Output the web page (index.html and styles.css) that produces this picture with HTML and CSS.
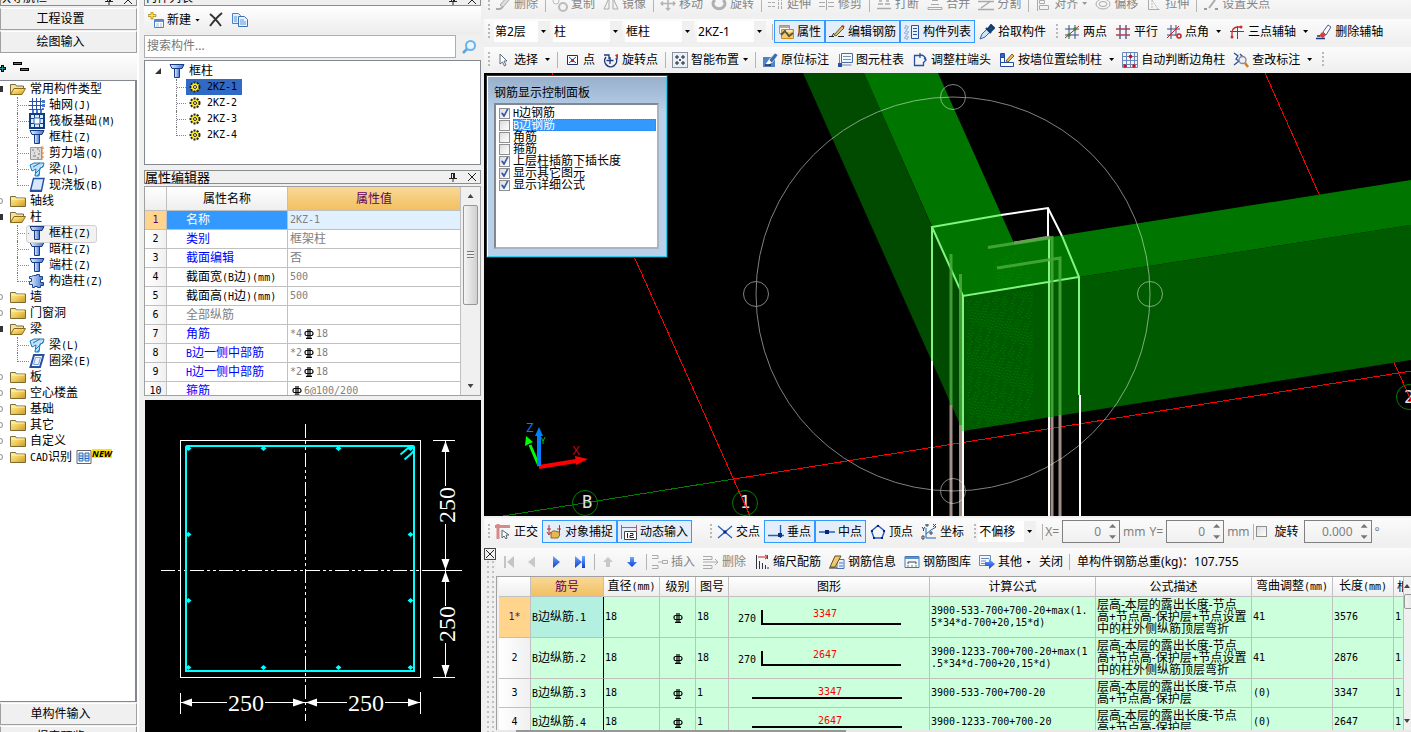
FILE: index.html
```html
<!DOCTYPE html>
<html lang="zh-CN">
<head>
<meta charset="utf-8">
<title>钢筋算量</title>
<link rel="stylesheet" href="styles.css">
</head>
<body>
<svg class="defs" aria-hidden="true">
  <defs>
    <linearGradient id="gold" x1="0" y1="0" x2="1" y2="1"><stop offset="0" stop-color="#fff0b0"/><stop offset=".5" stop-color="#f2cd55"/><stop offset="1" stop-color="#c8962a"/></linearGradient>
    <linearGradient id="blue" x1="0" y1="0" x2="1" y2="0"><stop offset="0" stop-color="#e8f2ff"/><stop offset="1" stop-color="#3f74d0"/></linearGradient>
    <linearGradient id="arrow" x1="0" y1="0" x2="0" y2="1"><stop offset="0" stop-color="#6fa8ff"/><stop offset="1" stop-color="#0a3fd0"/></linearGradient>
    <pattern id="hatch" width="9" height="42" patternUnits="userSpaceOnUse" patternTransform="rotate(24)">
      <path d="M1 0v26M4 12v28M7 4v20M7 34v8" stroke="#00a000" stroke-dasharray="1 2"/>
    </pattern>
  </defs>
  <symbol id="folder" viewBox="0 0 16 16"><path d="M.5 13.500V3.500h5l1 1.500h9v8.500z" fill="url(#gold)" stroke="#7c6a38"/><path d="M1.500 6h13" stroke="#fff3c0"/></symbol>
  <symbol id="folder-open" viewBox="0 0 16 16"><path d="M.5 13.500V3.500h5l1 1.500h7v3" fill="#f3e2a0" stroke="#7c6a38"/><path d="M.5 13.500L4 7.500h11.500l-3.500 6z" fill="url(#gold)" stroke="#8a6a20"/></symbol>
  <symbol id="grid" viewBox="0 0 16 16"><path d="M3.500 1v12M7.500 1v12M11.500 1v12M0 4.500h13M0 8.500h13M0 12.500h13" stroke="#2a50a8" fill="none"/><path d="M3 13h2v3H3zM7 13h2v3H7zM11 13h2v3h-2zM13 3h3v3h-3zM13 7h3v3h-3zM13 11h2v2h-2z" fill="#4a78d0"/></symbol>
  <symbol id="raft" viewBox="0 0 16 16"><path d="M1 1h14v14H1z" fill="#d8ecff" stroke="#123c7c" stroke-width="2"/><path d="M5.500 1v14M10.500 1v14M1 5.500h14M1 10.500h14" stroke="#123c7c"/><path d="M5 5h6v6H5z" fill="#fff" stroke="#2c64b8"/></symbol>
  <symbol id="column" viewBox="0 0 16 16"><path d="M1 1.500h14l-2 4H3z" fill="url(#blue)" stroke="#173a86"/><path d="M5.500 5.500h5v9h-5z" fill="url(#blue)" stroke="#173a86"/></symbol>
  <symbol id="wall" viewBox="0 0 16 16"><path d="M1.500 2.500h11v12h-11z" fill="#ddd" stroke="#999"/><path d="M3 5h2M8 4h2M5 8h1M9 9h2M4 11h3M8 13h2M10 6h1" stroke="#777"/><path d="M13 1v14M12 3h3M12 8h3M12 12h3" stroke="#e08030"/></symbol>
  <symbol id="beam" viewBox="0 0 16 16"><path d="M1 4l4-2h10l-1 4-3 1-1 8H6l1-7-4 2z" fill="#bfe0f8" stroke="#1f7ab8"/><path d="M4 6l7-4M6 13l8-8M8 15l3-3" stroke="#1f7ab8"/></symbol>
  <symbol id="slab" viewBox="0 0 16 16"><path d="M4.500 1.500h10.500l-2.500 12H1.500z" fill="#d6e8fa" stroke="#2050a8" stroke-width="1.400"/><path d="M1 13h12v2H1z" fill="#2050a8"/></symbol>
  <symbol id="ring" viewBox="0 0 16 16"><path d="M5 2h9.500l-3.500 12H1.500z" fill="#fff" stroke="#2850a0" stroke-width="2"/><path d="M6.500 4.500h5l-2 7h-5z" fill="#e4f0ff" stroke="#7aa0dc"/></symbol>
  <symbol id="tiecol" viewBox="0 0 16 16"><path d="M4.500 2.500h3v-1h3v2h3v3h-2v3h3v3h-3v2h-3v-1h-3v1h-2v-3h-3v-3h2v-3h-2v-2h2z" fill="url(#blue)" stroke="#1c4590"/></symbol>
  <symbol id="book" viewBox="0 0 16 16"><path d="M1 1.500h14v13H1z" fill="#fff" stroke="#666"/><path d="M3 4h4v8H3zM9 4h4v8H9z" fill="#d6eaff" stroke="#2a66b8"/><path d="M3 7h4M9 7h4M3 9.500h4M9 9.500h4" stroke="#2a66b8"/></symbol>
  <symbol id="gear" viewBox="0 0 16 16"><circle cx="8" cy="8" r="4.500" fill="#ffef20" stroke="#222" stroke-width="2" stroke-dasharray="2 1.200"/><circle cx="8" cy="8" r="3" fill="#ffef20"/><circle cx="8" cy="8" r="1.500" fill="#fff" stroke="#222"/></symbol>
  <symbol id="new" viewBox="0 0 16 16"><path d="M6.500 7.500h9v8h-9z" fill="#fff" stroke="#4f7fc4"/><path d="M7 8h8v2H7z" fill="#5b8fd8"/><path d="M8 12h3M12 12h2M8 14h3M12 14h2" stroke="#9fc0ea"/><path d="M3 0h2v2.500h3v2H5V7H3V4.500H0v-2h3z" fill="#ffe34d" stroke="#a08010" stroke-width=".7"/></symbol>
  <symbol id="cross" viewBox="0 0 16 16"><path d="M2 2c4 3 8 8 11 12M14 1C9 5 5 10 2 14" stroke="#333" stroke-width="2" fill="none"/></symbol>
  <symbol id="copy" viewBox="0 0 16 16"><path d="M.5 1.500h6l2 2v8h-8z" fill="#e0eeff" stroke="#4a82c8"/><path d="M6.500 4.500h6l3 3v7h-9z" fill="#e8f3ff" stroke="#3b70b8"/><path d="M8 8h4M8 10h6M8 12h6M2 5h3M2 7h3M2 9h3" stroke="#5f96d8"/></symbol>
  <symbol id="search" viewBox="0 0 16 16"><circle cx="9.500" cy="6.500" r="4.500" fill="#eaf6ff" stroke="#6ab4e8" stroke-width="2"/><path d="M6 10l-4 4" stroke="#5aa4e0" stroke-width="2.500"/></symbol>
  <symbol id="pin" viewBox="0 0 10 10"><path d="M3 1.500h4M3.500 1v5M6.500 1v5M5.500 1v5M1 6.500h8M5 7v3" stroke="#222" fill="none"/></symbol>
  <symbol id="close" viewBox="0 0 10 10"><path d="M1 1l8 8M9 1l-8 8" stroke="#222" fill="none"/></symbol>
  <symbol id="rebar" viewBox="0 0 10 10"><path d="M2.500 2.500h5q1.500 0 1.500 2t-1.500 2h-5q-1.500 0-1.500-2t1.500-2zM4 0v9.500M6 0v9.500M2 9.300h6" fill="none" stroke="currentColor" stroke-width="1.200"/></symbol>

  <symbol id="g-erase" viewBox="0 0 16 16"><path d="M5 9l7-8 3 2-7 8z" fill="#ddd" stroke="#aaa"/><path d="M1 13h4l3-2" stroke="#aaa" stroke-width="2" fill="none"/></symbol>
  <symbol id="g-copy" viewBox="0 0 16 16"><circle cx="4" cy="5" r="3" fill="none" stroke="#bbb"/><circle cx="11" cy="11" r="4" fill="none" stroke="#bbb" stroke-width="2"/></symbol>
  <symbol id="g-mirror" viewBox="0 0 16 16"><path d="M6 2v11H1zM10 2v11h5z" fill="none" stroke="#aaa"/></symbol>
  <symbol id="g-move" viewBox="0 0 16 16"><path d="M8 1v13M1.500 7.500h13M6 3l2-2 2 2M6 12l2 2 2-2M3 5.500l-2 2 2 2M13 5.500l2 2-2 2" fill="none" stroke="#b4b4b4" stroke-width="1.500"/></symbol>
  <symbol id="g-rot" viewBox="0 0 16 16"><path d="M4 4a6 5 0 1 0 8 0" fill="none" stroke="#b0b0b0" stroke-width="3"/></symbol>
  <symbol id="g-ext" viewBox="0 0 16 16"><path d="M0 6.500h8M0 10.500h8M10.500 2v12M13.500 2v12" stroke="#aaa" stroke-dasharray="3 1"/></symbol>
  <symbol id="g-cut" viewBox="0 0 16 16"><path d="M7.500 2v12M0 6.500h6M0 10.500h6M9 6.500h6M9 10.500h6" stroke="#aaa"/></symbol>
  <symbol id="g-break" viewBox="0 0 16 16"><path d="M2 8h5M9 8h5M1 12.500h14M3 5h3M10 5h3" stroke="#aaa" stroke-width="1.500"/></symbol>
  <symbol id="g-join" viewBox="0 0 16 16"><path d="M4 8.500h8M1 13.500h14v-2H1zM5 4.500h6" fill="none" stroke="#aaa"/></symbol>
  <symbol id="g-split" viewBox="0 0 16 16"><path d="M0 5.500h16M0 13.500h16M3 12l10-7" fill="none" stroke="#aaa" stroke-width="1.500"/></symbol>
  <symbol id="g-align" viewBox="0 0 16 16"><path d="M2.500 1v14M4.500 4.500h5v3h-5zM4.500 9.500h9v4h-9z" fill="none" stroke="#aaa"/></symbol>
  <symbol id="g-off" viewBox="0 0 16 16"><ellipse cx="8" cy="8" rx="7" ry="5" fill="none" stroke="#aaa"/><ellipse cx="8" cy="8" rx="4" ry="2.500" fill="none" stroke="#aaa"/></symbol>
  <symbol id="g-stretch" viewBox="0 0 16 16"><path d="M2.500 3v10.500h11" fill="none" stroke="#aaa"/><path d="M6 4l6 9M6 4v9" stroke="#bbb" stroke-dasharray="2 1"/></symbol>
  <symbol id="g-grip" viewBox="0 0 16 16"><path d="M1 13h3M12 13h3" stroke="#999" stroke-width="2"/><path d="M6 12l6-8" stroke="#aaa" stroke-width="2"/></symbol>

  <symbol id="prop" viewBox="0 0 16 16"><path d="M1.500 1.500h10v8h-10z" fill="#fff" stroke="#a89878"/><path d="M2 2h9v2H2z" fill="#b8a898"/><path d="M3.500 5.500h12v9h-12z" fill="#f8c870" stroke="#d08820"/><path d="M3 11l4-4 4 5 4-3" stroke="#5a5a30" stroke-width="2" fill="none"/><path d="M8 7h6" stroke="#fff"/></symbol>
  <symbol id="editbar" viewBox="0 0 16 16"><path d="M0 12.500h5M9 12.500h6M3 12l2-3" stroke="#222" fill="none"/><path d="M5 11l8-9 2 2-8 8z" fill="#d8c070" stroke="#705820"/><path d="M12 2l2-1 1.500 1.500L15 4z" fill="#c03020"/></symbol>
  <symbol id="complist" viewBox="0 0 16 16"><path d="M1 2h3v3H1zM1 7h3v3H1zM1 12h3v3H1z" fill="none" stroke="#7a98c8" stroke-dasharray="2 1"/><path d="M7.500 1.500h7v13h-7z" fill="#eaf2ff" stroke="#2d559c"/><path d="M9 4.500h4M9 7.500h4M9 10.500h4" stroke="#2d559c"/></symbol>
  <symbol id="dropper" viewBox="0 0 16 16"><path d="M1 15l2-5 5-5 3 3-5 5z" fill="#cfe6fa" stroke="#2d6aa8"/><path d="M7 4l5 5M9 5l3-4 3 3-4 4z" stroke="#123c70" stroke-width="2" fill="#1c4c88"/></symbol>
  <symbol id="ax2" viewBox="0 0 16 16"><path d="M5 1v14M11 1v14M1 5h14M1 11h14" stroke="#3b4a8c"/><path d="M1 14L15 2" stroke="#c02020"/><circle cx="5" cy="11" r="1.800" fill="#3a8a30"/><circle cx="11" cy="5" r="1.800" fill="#3a8a30"/></symbol>
  <symbol id="axp" viewBox="0 0 16 16"><path d="M5 1v14M11 1v14" stroke="#3b4a8c" stroke-width="1.300"/><path d="M1 5h14M1 11h14" stroke="#b04050" stroke-width="1.300"/></symbol>
  <symbol id="axa" viewBox="0 0 16 16"><path d="M5 1v14M10 1v11M1 5h13M1 11h9" stroke="#3b4a8c"/><path d="M1 14L13 2" stroke="#c02020"/><circle cx="13" cy="12" r="2" fill="none" stroke="#c02020" stroke-width="1.500"/></symbol>
  <symbol id="ax3" viewBox="0 0 16 16"><path d="M1 7.500h14M8.500 2v13" stroke="#3b4a8c" fill="none"/><path d="M3 13V9q0-5 5-6h4" stroke="#c83030" fill="none" stroke-width="1.300"/><circle cx="3" cy="13" r="1.500" fill="#c83030"/><circle cx="12" cy="3" r="1.500" fill="#c83030"/></symbol>
  <symbol id="axdel" viewBox="0 0 16 16"><path d="M7 8l5-7 3 2-5 8z" fill="#fff" stroke="#4a5a90"/><path d="M6 8l4 3-3 3-4-2z" fill="#d04040"/><path d="M0 14.500h9M1 12h3" stroke="#203878" stroke-width="1.500"/></symbol>

  <symbol id="cursor" viewBox="0 0 16 16"><path d="M5 2v10l2.500-2 2 4 1.500-1-2-4h3z" fill="#fff" stroke="#5a6a80"/></symbol>
  <symbol id="pt" viewBox="0 0 16 16"><path d="M3.500 3.500h10v9h-10z" fill="#fff" stroke="#203060"/><path d="M5 5l7 6M12 5l-7 6" stroke="#2848a0"/><path d="M7 7h3v3H7z" fill="#d02020"/></symbol>
  <symbol id="rotpt" viewBox="0 0 16 16"><path d="M3 5a6 6 0 1 0 10 1" fill="none" stroke="#1f3c80" stroke-width="1.500"/><path d="M7 5v7M3.500 8.500h7M1 3h5v4" stroke="#1f3c80" stroke-width="1.300" fill="none"/><path d="M12 3l3-1v6z" fill="#c03030"/></symbol>
  <symbol id="smart" viewBox="0 0 16 16"><path d="M.5.5h15v15H.5z" fill="#e8f0fa" stroke="#234" stroke-dasharray="1 1"/><path d="M5 3v4M3 5h4M11 3v4M9 5h4M5 9v4M3 11h4M11 9v4M9 11h4M8 7v2M7 8h2" stroke="#222"/></symbol>
  <symbol id="mark" viewBox="0 0 16 16"><path d="M1 5h12v10H1z" fill="#4f82c8"/><path d="M3 13l5-7 3 3-5 5z" fill="#fff"/><path d="M7 8l6-7 3 2-6 8z" fill="#3a6cb0" stroke="#fff" stroke-width=".6"/><path d="M3 13h6" stroke="#123" stroke-width="1.500"/></symbol>
  <symbol id="coltab" viewBox="0 0 16 16"><path d="M4.500 1.500h11v9h-11z" fill="#f4f8ff" stroke="#4a6ca8"/><path d="M6 4.500h8M6 7.500h8" stroke="#7a90b8"/><path d="M2.500 2v11h12" stroke="#6a88b8" fill="none"/><path d="M1 11h4v4H1z" fill="#2850a0"/></symbol>
  <symbol id="adj" viewBox="0 0 16 16"><path d="M8 3.500H2.500v10h9v-3M8 1v5M8 3q5 0 6 5l-3 3M12 6l2 2" fill="none" stroke="#2850a0" stroke-width="1.300"/></symbol>
  <symbol id="bywall" viewBox="0 0 16 16"><path d="M1.500 1.500h4v4h-4zM1.500 5.500h4v5h-4zM1.500 10.500h13v4h-13z" fill="#fff" stroke="#2248a0"/><path d="M2 2h3v3H2z" fill="#3a62b8"/><path d="M7 9l6-7 2 2-6 6z" fill="#e8c060" stroke="#806020"/></symbol>
  <symbol id="auto" viewBox="0 0 16 16"><path d="M.5.5h15v15H.5z" fill="#eef4ff" stroke="#6a86b8"/><path d="M4.500 0v16M8.500 0v16M12.500 0v16M0 4.500h16M0 8.500h16M0 12.500h16" stroke="#6a86b8"/><circle cx="8.500" cy="4.500" r="1.800" fill="#d01010"/><circle cx="3" cy="14" r="1.800" fill="#d01010"/><circle cx="12" cy="14" r="1.800" fill="#d01010"/></symbol>
  <symbol id="check" viewBox="0 0 16 16"><path d="M1 1l4 3-2 3 3 2-5 4M7 2l3 3" stroke="#2850a0" stroke-width="1.300" fill="none"/><circle cx="9.500" cy="8" r="3.500" fill="#eef" stroke="#888" stroke-width="1.300"/><path d="M12 11l3 4" stroke="#d08020" stroke-width="2.500"/></symbol>

  <symbol id="ortho" viewBox="0 0 16 16"><path d="M0 2.500h15M3 0v15" stroke="#d88a8a" stroke-width="3"/><path d="M7 6v8l2-2 2 3 1-1-1-3h3z" fill="#fff" stroke="#567"/></symbol>
  <symbol id="snap" viewBox="0 0 16 16"><path d="M3 1v9M1 8l2 3 2-3M13.500 1v9M1 5h4M11 5h4" stroke="#b03030" fill="none"/><path d="M5 14V9q1-3 4-2l4 1q2 3-1 6z" fill="#e8b850" stroke="#906820"/></symbol>
  <symbol id="dyn" viewBox="0 0 16 16"><path d="M0 3.500h16M.5 1v14M15.500 1v6" stroke="#b06060"/><path d="M3.500 7.500h12v8h-12z" fill="#fff" stroke="#444"/><path d="M6.500 9v5M9 9.500h3v2H9v2h4" stroke="#222" fill="none"/></symbol>
  <symbol id="xpt" viewBox="0 0 16 16"><path d="M1 2l14 12M15 2L1 14" stroke="#2060c0" stroke-width="1.300"/><path d="M6.500 6.500h3v3h-3z" fill="#102080"/></symbol>
  <symbol id="perp" viewBox="0 0 16 16"><path d="M0 11.500h16M12.500 1v13" stroke="#2060b0" stroke-width="1.300"/><path d="M10 9h4v4h-4z" fill="#103080"/></symbol>
  <symbol id="mid" viewBox="0 0 16 16"><path d="M0 8h16" stroke="#2060b0" stroke-width="1.500"/><path d="M6 6h4v4H6z" fill="#102080"/></symbol>
  <symbol id="apex" viewBox="0 0 16 16"><path d="M8 1.500L14.500 7l-2.500 7H4L1.500 7z" fill="none" stroke="#2060c0" stroke-width="1.400"/><path d="M7 1h2v2H7zM1 6h2v2H1zM13 6h2v2h-2zM3 13h2v2H3zM11 13h2v2h-2z" fill="#102080"/></symbol>
  <symbol id="coord" viewBox="0 0 16 16"><path d="M5 4v10h10M5 10l5-4 5-3" stroke="#2060b0" fill="none"/><path d="M1 3l1.500 2L4 3M2.500 5v2M12 0l3 3M15 0l-3 3M1 12h2v3H1zM5 0h2v2H5zM9 8h2v2H9z" stroke="#345" fill="none"/></symbol>

  <symbol id="first" viewBox="0 0 16 16"><path d="M4 2h2v12H4zM14 2v12L7 8z" fill="#c4c4c4"/></symbol>
  <symbol id="prev" viewBox="0 0 16 16"><path d="M11 2.500v11L4 8z" fill="#c8c8c8"/></symbol>
  <symbol id="next" viewBox="0 0 16 16"><path d="M5 2v12l7-6z" fill="url(#arrow)"/></symbol>
  <symbol id="last" viewBox="0 0 16 16"><path d="M3 2v12l7-6zM10 2h3v12h-3z" fill="url(#arrow)"/></symbol>
  <symbol id="up" viewBox="0 0 16 16"><path d="M8 3l5 5h-3v5H6V8H3z" fill="#c8c8c8"/></symbol>
  <symbol id="down" viewBox="0 0 16 16"><path d="M8 13L3 8h3V3h4v5h3z" fill="url(#arrow)"/></symbol>
  <symbol id="ins" viewBox="0 0 16 16"><path d="M0 1.500h6v3H0M0 11.500h6v3H0M6 8h4" stroke="#aaa" fill="none"/><path d="M10.500 6.500h5v3h-5z" fill="none" stroke="#aaa"/></symbol>
  <symbol id="del" viewBox="0 0 16 16"><path d="M0 2.500h9v3H0M0 11.500h9v3H0M0 8h15M12 5l3 3-3 3" stroke="#aaa" fill="none"/></symbol>
  <symbol id="scale" viewBox="0 0 16 16"><path d="M2.500 1v14M5.500 7v8M8.500 9v6M11.500 11v4M14 13v2" stroke="#334"/><path d="M4 3h9M11 1l3 2-3 2M13.500 1v4" stroke="#b02020" fill="none"/></symbol>
  <symbol id="info" viewBox="0 0 16 16"><path d="M8 5.500h7v9H8z" fill="#e8f0ff" stroke="#4a70b0"/><path d="M1 13L6 2h6L6 13z" fill="#f0c870" stroke="#605020"/><path d="M0 14h8" stroke="#222"/><path d="M10 9h4M10 12h4" stroke="#4a70b0"/></symbol>
  <symbol id="lib" viewBox="0 0 16 16"><path d="M1 2.500h14v11H1z" fill="#f4f9ff" stroke="#4878b0"/><path d="M1 3h14v2H1z" fill="#5890d0"/><path d="M4 10V8h8v2" stroke="#444" fill="none"/><path d="M3 12h2M7 12h2M11 12h2" stroke="#50a040"/></symbol>
  <symbol id="other" viewBox="0 0 16 16"><path d="M.5 1.500h11v10H.5z" fill="#f4f8ff" stroke="#6a88b8"/><path d="M2 4.500h8M2 7h5M2 9.500h4" stroke="#6a88b8"/><path d="M6 8h4V5l6 5-6 5v-3H6z" fill="url(#arrow)"/></symbol>
</svg>

<main class="app">
  <nav class="nav">
    <header class="cap cap-cut"><span class="cap-shift">模块导航栏</span><span class="cap-btns"><svg class="ic10"><use href="#pin"/></svg><svg class="ic10"><use href="#close"/></svg></span></header>
    <button class="section first">工程设置</button>
    <button class="section">绘图输入</button>
    <div class="navbar">
      <svg class="fold-icons" viewBox="0 0 30 12"><path d="M0 7.500h6M2.500 4v7M13 2.500h9M20 8.500h9" stroke="#000" stroke-width="3"/><path d="M0 7.500h5M2.500 5v5M14 2.500h7M21 8.500h7" stroke="#1c9090"/></svg>
    </div>
    <ul class="tree">
      <li><div class="node open"><svg class="ic"><use href="#folder-open"/></svg>常用构件类型</div>
        <ul class="kids">
          <li><svg class="ic"><use href="#grid"/></svg><span class="lbl">轴网<span class="m">(J)</span></span></li>
          <li><svg class="ic"><use href="#raft"/></svg><span class="lbl">筏板基础<span class="m">(M)</span></span></li>
          <li><svg class="ic"><use href="#column"/></svg><span class="lbl">框柱<span class="m">(Z)</span></span></li>
          <li><svg class="ic"><use href="#wall"/></svg><span class="lbl">剪力墙<span class="m">(Q)</span></span></li>
          <li><svg class="ic"><use href="#beam"/></svg><span class="lbl">梁<span class="m">(L)</span></span></li>
          <li><svg class="ic"><use href="#slab"/></svg><span class="lbl">现浇板<span class="m">(B)</span></span></li>
        </ul></li>
      <li><div class="node"><svg class="ic"><use href="#folder"/></svg>轴线</div></li>
      <li><div class="node open"><svg class="ic"><use href="#folder-open"/></svg>柱</div>
        <ul class="kids">
          <li class="current"><svg class="ic"><use href="#column"/></svg><span class="lbl">框柱<span class="m">(Z)</span></span></li>
          <li><svg class="ic"><use href="#column"/></svg><span class="lbl">暗柱<span class="m">(Z)</span></span></li>
          <li><svg class="ic"><use href="#column"/></svg><span class="lbl">端柱<span class="m">(Z)</span></span></li>
          <li><svg class="ic"><use href="#tiecol"/></svg><span class="lbl">构造柱<span class="m">(Z)</span></span></li>
        </ul></li>
      <li><div class="node"><svg class="ic"><use href="#folder"/></svg>墙</div></li>
      <li><div class="node"><svg class="ic"><use href="#folder"/></svg>门窗洞</div></li>
      <li><div class="node open"><svg class="ic"><use href="#folder-open"/></svg>梁</div>
        <ul class="kids">
          <li><svg class="ic"><use href="#beam"/></svg><span class="lbl">梁<span class="m">(L)</span></span></li>
          <li><svg class="ic"><use href="#ring"/></svg><span class="lbl">圈梁<span class="m">(E)</span></span></li>
        </ul></li>
      <li><div class="node"><svg class="ic"><use href="#folder"/></svg>板</div></li>
      <li><div class="node"><svg class="ic"><use href="#folder"/></svg>空心楼盖</div></li>
      <li><div class="node"><svg class="ic"><use href="#folder"/></svg>基础</div></li>
      <li><div class="node"><svg class="ic"><use href="#folder"/></svg>其它</div></li>
      <li><div class="node"><svg class="ic"><use href="#folder"/></svg>自定义</div></li>
      <li><div class="node"><svg class="ic"><use href="#folder"/></svg><span><span class="m">CAD</span>识别</span><svg class="ic"><use href="#book"/></svg><b class="new">NEW</b></div></li>
    </ul>
    <button class="section">单构件输入</button>
    <button class="section">报表预览</button>
  </nav>

  <section class="mid">
    <header class="cap cap-cut"><span>构件列表</span><span class="cap-btns"><svg class="ic10"><use href="#pin"/></svg><svg class="ic10"><use href="#close"/></svg></span></header>
    <div class="minibar">
      <button><svg class="ic"><use href="#new"/></svg>新建<i class="dd"></i></button>
      <button aria-label="删除"><svg class="ic"><use href="#cross"/></svg></button>
      <button aria-label="复制"><svg class="ic"><use href="#copy"/></svg></button>
    </div>
    <div class="search"><input type="text" aria-label="搜索构件" placeholder="搜索构件..."><button aria-label="搜索"><svg class="ic"><use href="#search"/></svg></button></div>
    <div class="comps">
      <div class="comp-root"><i class="tri"></i><svg class="ic"><use href="#column"/></svg>框柱</div>
      <ul class="kids">
        <li class="sel"><span class="comp"><svg class="ic"><use href="#gear"/></svg><span class="m">2KZ-1</span></span></li>
        <li><span class="comp"><svg class="ic"><use href="#gear"/></svg><span class="m">2KZ-2</span></span></li>
        <li><span class="comp"><svg class="ic"><use href="#gear"/></svg><span class="m">2KZ-3</span></span></li>
        <li><span class="comp"><svg class="ic"><use href="#gear"/></svg><span class="m">2KZ-4</span></span></li>
      </ul>
    </div>
    <header class="cap cap-prop"><span>属性编辑器</span><span class="cap-btns"><svg class="ic10"><use href="#pin"/></svg><svg class="ic10"><use href="#close"/></svg></span></header>
    <div class="props">
      <table class="ptable">
        <colgroup><col class="p-n"><col class="p-k"><col></colgroup>
        <thead><tr><th></th><th>属性名称</th><th class="hot">属性值</th></tr></thead>
        <tbody>
          <tr class="on"><th class="m">1</th><td>名称</td><td class="m">2KZ-1</td></tr>
          <tr><th class="m">2</th><td>类别</td><td>框架柱</td></tr>
          <tr><th class="m">3</th><td>截面编辑</td><td>否</td></tr>
          <tr class="blk"><th class="m">4</th><td>截面宽<span class="m">(B</span>边<span class="m">)(mm)</span></td><td class="m">500</td></tr>
          <tr class="blk"><th class="m">5</th><td>截面高<span class="m">(H</span>边<span class="m">)(mm)</span></td><td class="m">500</td></tr>
          <tr class="dim"><th class="m">6</th><td>全部纵筋</td><td></td></tr>
          <tr><th class="m">7</th><td>角筋</td><td class="m">*4<svg class="rb"><use href="#rebar"/></svg>18</td></tr>
          <tr><th class="m">8</th><td><span class="m">B</span>边一侧中部筋</td><td class="m">*2<svg class="rb"><use href="#rebar"/></svg>18</td></tr>
          <tr><th class="m">9</th><td><span class="m">H</span>边一侧中部筋</td><td class="m">*2<svg class="rb"><use href="#rebar"/></svg>18</td></tr>
          <tr><th class="m">10</th><td>箍筋</td><td class="m"><svg class="rb"><use href="#rebar"/></svg>6@100/200</td></tr>
        </tbody>
      </table>
      <div class="vbar"><i class="a-up"></i><i class="thumb"></i><i class="spacer"></i><i class="a-dn"></i></div>
    </div>
    <div class="sketch">
      <svg viewBox="145 400 336 332" preserveAspectRatio="xMinYMin meet">
        <g fill="none" stroke="#fff" shape-rendering="crispEdges">
          <path d="M180.500 440.500h240v237h-240z"/>
          <path d="M305.500 424v297M161 570.500h301" stroke-dasharray="14 3 3 3 3 3"/>
          <path d="M433 440.500h22M433 677.500h22M425 570.500h34M445.500 440v46M445.500 524v82M445.500 643v34M180.500 693v21M420.500 692v22M181 702.500h46M265 702.500h82M385 702.500h36"/>
        </g>
        <path d="M445.500 441l4 11h-8zM445.500 570l4-11h-8zM445.500 571l4 11h-8zM445.500 677l4-12h-8zM181 702.500l11-4v8zM305 702.500l-12-4v8zM306 702.500l11-4v8zM420 702.500l-12-4v8z" fill="#fff"/>
        <g fill="none" stroke="#0ff" stroke-width="2"><path d="M187 446h226q1 0 1 1v224H186V447z"/><path d="M400.500 454.500l7-6q4-2 6-1M404.500 459.500l7-6 3-4"/></g>
        <path d="M188.500 446l3 2.500-3 2.500-3-2.500zM263.500 446l3 2.500-3 2.500-3-2.500zM338.500 446l3 2.500-3 2.500-3-2.500zM410.500 446l3 2.500-3 2.500-3-2.500zM188.500 665l3 2.500-3 2.500-3-2.500zM263.500 665l3 2.500-3 2.500-3-2.500zM338.500 665l3 2.500-3 2.500-3-2.500zM410.500 665l3 2.500-3 2.500-3-2.500zM188.500 532l3 2.500-3 2.500-3-2.500zM410.500 532l3 2.500-3 2.500-3-2.500zM188.500 598l3 2.500-3 2.500-3-2.500zM410.500 598l3 2.500-3 2.500-3-2.500z" fill="#0ff"/>
        <g class="dimtext"><text x="246" y="711">250</text><text x="366" y="711">250</text><text transform="translate(455 505) rotate(-90)">250</text><text transform="translate(455 624) rotate(-90)">250</text></g>
      </svg>
    </div>
  </section>

  <section class="work">
    <div class="bars">
      <div class="bar bar-top">
        <i class="grip"></i><button disabled><svg class="ic"><use href="#g-erase"/></svg>删除</button><i class="sep"></i>
        <button disabled><svg class="ic"><use href="#g-copy"/></svg>复制</button><button disabled><svg class="ic"><use href="#g-mirror"/></svg>镜像</button><i class="sep"></i>
        <button disabled><svg class="ic"><use href="#g-move"/></svg>移动</button><button disabled><svg class="ic"><use href="#g-rot"/></svg>旋转</button><i class="sep"></i>
        <button disabled><svg class="ic"><use href="#g-ext"/></svg>延伸</button><button disabled><svg class="ic"><use href="#g-cut"/></svg>修剪</button><i class="sep"></i>
        <button disabled><svg class="ic"><use href="#g-break"/></svg>打断</button><button disabled><svg class="ic"><use href="#g-join"/></svg>合并</button><button disabled><svg class="ic"><use href="#g-split"/></svg>分割</button><i class="sep"></i>
        <button disabled><svg class="ic"><use href="#g-align"/></svg>对齐<i class="dd"></i></button><button disabled><svg class="ic"><use href="#g-off"/></svg>偏移</button><button disabled><svg class="ic"><use href="#g-stretch"/></svg>拉伸</button><i class="sep"></i>
        <button disabled><svg class="ic"><use href="#g-grip"/></svg>设置夹点</button>
      </div>
      <div class="bar">
        <i class="grip grip-combo"></i>
        <label class="combo c1"><select aria-label="楼层"><option>第2层</option></select><i class="dd"></i></label>
        <label class="combo c2"><select aria-label="构件大类"><option>柱</option></select><i class="dd"></i></label>
        <label class="combo c2"><select aria-label="构件类型"><option>框柱</option></select><i class="dd"></i></label>
        <label class="combo c2"><select aria-label="构件"><option>2KZ-1</option></select><i class="dd"></i></label>
        <i class="sep sep-tog"></i>
        <button class="tog"><svg class="ic"><use href="#prop"/></svg>属性</button><button class="tog"><svg class="ic"><use href="#editbar"/></svg>编辑钢筋</button><button class="tog"><svg class="ic"><use href="#complist"/></svg>构件列表</button>
        <button><svg class="ic"><use href="#dropper"/></svg>拾取构件</button>
        <i class="grip grip-in"></i>
        <button><svg class="ic"><use href="#ax2"/></svg>两点</button><button><svg class="ic"><use href="#axp"/></svg>平行</button><button><svg class="ic"><use href="#axa"/></svg>点角<i class="dd wide"></i></button><button><svg class="ic"><use href="#ax3"/></svg>三点辅轴<i class="dd wide"></i></button><button><svg class="ic"><use href="#axdel"/></svg>删除辅轴</button>
      </div>
      <div class="bar">
        <i class="grip"></i>
        <button><svg class="ic"><use href="#cursor"/></svg>选择<i class="dd wide"></i></button><i class="sep"></i>
        <button><svg class="ic"><use href="#pt"/></svg>点</button><button><svg class="ic"><use href="#rotpt"/></svg>旋转点</button><i class="sep"></i>
        <button><svg class="ic"><use href="#smart"/></svg>智能布置<i class="dd"></i></button><i class="sep"></i>
        <button><svg class="ic"><use href="#mark"/></svg>原位标注</button><button><svg class="ic"><use href="#coltab"/></svg>图元柱表</button><button><svg class="ic"><use href="#adj"/></svg>调整柱端头</button><button><svg class="ic"><use href="#bywall"/></svg>按墙位置绘制柱<i class="dd wide"></i></button><button><svg class="ic"><use href="#auto"/></svg>自动判断边角柱</button><button><svg class="ic"><use href="#check"/></svg>查改标注<i class="dd wide"></i></button>
        <i class="grip grip-in"></i>
      </div>
    </div>

    <div class="view">
      <svg class="scene" viewBox="484 73 927 443" preserveAspectRatio="xMinYMin slice">
        <path d="M552 73L750 516M734 479L1411 371M1265 73L1413 405" stroke="#f00" fill="none" shape-rendering="crispEdges"/>
        <path d="M503 516L734 479" stroke="#008000" shape-rendering="crispEdges"/>
        <path d="M803 73h61L932 227l31 69v135z" fill="#004b00"/>
        <path d="M864 73h74l76 170 397-63v45l-332 52-116 19z" fill="#007600"/>
        <path d="M963 296l116-19 332-52v135L963 431z" fill="#005a00"/>
        <path d="M967 300l66-10v130l-60 9-6-20zM994 262l26-14 13 34-36 6z" fill="url(#hatch)" opacity=".8"/>
        <g fill="none" stroke="#fff" stroke-width="2">
          <path d="M1001 215l47-7 14 28M1048 208v29M932 361v155M963 431v85M1049 417v99M1080 395v121"/>
          <path d="M1001 215l-69 12 31 69 116-19-17-41M932 227v134M963 296v135M1049 237v180M1079 277v118" stroke="#80f580"/>
        </g>
        <g fill="none" stroke-width="3">
          <path d="M951 405v111M960.500 425v91M1052 417v99M1060 415v101M1014 243l36-6" stroke="#a09088"/>
          <path d="M951 254v151M960.500 274v151M988 247.500l64-10v180M997 268l63-10v157" stroke="#4cac3c" opacity=".85"/>
        </g>
        <g fill="none" stroke="#fff" opacity=".5"><circle cx="953" cy="294" r="197"/><circle cx="953" cy="97" r="12.500"/><circle cx="756" cy="294" r="12.500"/><circle cx="1150" cy="294" r="12.500"/><circle cx="953" cy="491" r="12.500"/></g>
        <g fill="none" stroke="#008000"><circle cx="585" cy="503" r="12.500"/><circle cx="745" cy="503" r="12.500"/><circle cx="1409" cy="397" r="12.500"/></g>
        <g class="axis-no"><text x="587" y="508">B</text><text x="745" y="508">1</text><text x="1409" y="403">2</text></g>
        <path d="M739 491l11 25M1407 391l6 14" stroke="#f00"/>
        <path d="M539 466l-9-21" stroke="#0f0" stroke-width="3"/><path d="M526 436l7 6-8 4z" fill="#0f0"/>
        <path d="M539 467l37-6" stroke="#f00" stroke-width="4"/><path d="M575 456l13 3-12 6z" fill="#f00"/>
        <path d="M539 466v-32" stroke="#0080ff" stroke-width="4"/><path d="M539 427l4 9h-8z" fill="#0080ff"/>
        <g class="axis-l"><text x="530" y="432" fill="#0080ff">Z</text><text x="543" y="444" fill="#0c0" class="small">Y</text><text x="576" y="455" fill="#c00">X</text></g>
      </svg>
      <form class="panel">
        <h2>钢筋显示控制面板</h2>
        <div class="panel-list">
          <label><input type="checkbox" checked><span><span class="m">H</span>边钢筋</span></label>
          <label class="hl"><input type="checkbox"><span><span class="m">B</span>边钢筋</span></label>
          <label><input type="checkbox"><span>角筋</span></label>
          <label><input type="checkbox"><span>箍筋</span></label>
          <label><input type="checkbox" checked><span>上层柱插筋下插长度</span></label>
          <label><input type="checkbox" checked><span>显示其它图元</span></label>
          <label><input type="checkbox" checked><span>显示详细公式</span></label>
        </div>
      </form>
    </div>

    <div class="bar bar-snap">
      <i class="grip"></i>
      <button><svg class="ic"><use href="#ortho"/></svg>正交</button><button class="tog"><svg class="ic"><use href="#snap"/></svg>对象捕捉</button><button class="tog"><svg class="ic"><use href="#dyn"/></svg>动态输入</button>
      <i class="grip grip-far"></i>
      <button><svg class="ic"><use href="#xpt"/></svg>交点</button><button class="tog"><svg class="ic"><use href="#perp"/></svg>垂点</button><button class="tog"><svg class="ic"><use href="#mid"/></svg>中点</button><button><svg class="ic"><use href="#apex"/></svg>顶点</button><button><svg class="ic"><use href="#coord"/></svg>坐标</button>
      <i class="grip grip-in"></i>
      <label class="combo c3"><select aria-label="偏移方式"><option>不偏移</option></select><i class="dd"></i></label>
      <i class="sep"></i>
      <label class="num"><span>X=</span><span class="spin"><input type="text" value="0"><i class="spins"></i></span><span>mm</span></label>
      <label class="num"><span>Y=</span><span class="spin"><input type="text" value="0"><i class="spins"></i></span><span>mm</span></label>
      <i class="sep"></i>
      <label class="rot"><input type="checkbox">旋转</label>
      <span class="num"><span class="spin wide"><input type="text" value="0.000" aria-label="旋转角度"><i class="spins"></i></span><span>°</span></span>
    </div>

    <div class="dock">
      <div class="gutter"><button aria-label="关闭"><svg class="ic10"><use href="#close"/></svg></button></div>
      <div class="dock-main">
        <div class="bar bar-dock">
          <button class="nv" disabled aria-label="首条"><svg class="ic"><use href="#first"/></svg></button><button class="nv" disabled aria-label="上一条"><svg class="ic"><use href="#prev"/></svg></button><button class="nv" aria-label="下一条"><svg class="ic"><use href="#next"/></svg></button><button class="nv" aria-label="末条"><svg class="ic"><use href="#last"/></svg></button><i class="sep"></i>
          <button class="nv" disabled aria-label="上移"><svg class="ic"><use href="#up"/></svg></button><button class="nv" aria-label="下移"><svg class="ic"><use href="#down"/></svg></button><i class="sep"></i>
          <button disabled><svg class="ic"><use href="#ins"/></svg>插入</button><button disabled><svg class="ic"><use href="#del"/></svg>删除</button><button><svg class="ic"><use href="#scale"/></svg>缩尺配筋</button><button><svg class="ic"><use href="#info"/></svg>钢筋信息</button><button><svg class="ic"><use href="#lib"/></svg>钢筋图库</button><button><svg class="ic"><use href="#other"/></svg>其他<i class="dd"></i></button><button>关闭</button><i class="sep"></i>
          <span class="total">单构件钢筋总重(kg)：107.755</span>
        </div>
        <div class="grid-wrap">
          <table class="rtable">
            <colgroup><col class="w32"><col class="w73"><col class="w56"><col class="w36"><col class="w33"><col><col class="w166"><col class="w156"><col class="w81"><col class="w61"><col class="w10"></colgroup>
            <thead><tr><th></th><th class="hot">筋号</th><th>直径<span class="m">(mm)</span></th><th>级别</th><th>图号</th><th>图形</th><th>计算公式</th><th>公式描述</th><th>弯曲调整<span class="m">(mm)</span></th><th>长度<span class="m">(mm)</span></th><th class="edge">根数</th></tr></thead>
            <tbody>
              <tr class="tall on"><th class="m">1*</th><td><span class="m">B</span>边纵筋<span class="m">.1</span></td><td class="m">18</td><td class="c"><svg class="rb"><use href="#rebar"/></svg></td><td class="m">18</td><td class="shape"><svg viewBox="0 0 200 40"><path d="M33 13v14h139" /><text class="k" x="9" y="25">270</text><text class="r" x="96" y="20">3347</text></svg></td><td class="m">3900-533-700+700-20+max(1.<br>5*34*d-700+20,15*d)</td><td>层高-本层的露出长度-节点<br>高+节点高-保护层+节点设置<br>中的柱外侧纵筋顶层弯折</td><td class="m">41</td><td class="m">3576</td><td class="m">1</td></tr>
              <tr class="tall"><th class="m">2</th><td><span class="m">B</span>边纵筋<span class="m">.2</span></td><td class="m">18</td><td class="c"><svg class="rb"><use href="#rebar"/></svg></td><td class="m">18</td><td class="shape"><svg viewBox="0 0 200 40"><path d="M33 13v14h139"/><text class="k" x="9" y="25">270</text><text class="r" x="96" y="20">2647</text></svg></td><td class="m">3900-1233-700+700-20+max(1<br>.5*34*d-700+20,15*d)</td><td>层高-本层的露出长度-节点<br>高+节点高-保护层+节点设置<br>中的柱外侧纵筋顶层弯折</td><td class="m">41</td><td class="m">2876</td><td class="m">1</td></tr>
              <tr><th class="m">3</th><td><span class="m">B</span>边纵筋<span class="m">.3</span></td><td class="m">18</td><td class="c"><svg class="rb"><use href="#rebar"/></svg></td><td class="m">1</td><td class="shape"><svg viewBox="0 0 200 28"><path d="M23 19h150"/><text class="r" x="101" y="16">3347</text></svg></td><td class="m">3900-533-700+700-20</td><td>层高-本层的露出长度-节点<br>高+节点高-保护层</td><td class="m">(0)</td><td class="m">3347</td><td class="m">1</td></tr>
              <tr><th class="m">4</th><td><span class="m">B</span>边纵筋<span class="m">.4</span></td><td class="m">18</td><td class="c"><svg class="rb"><use href="#rebar"/></svg></td><td class="m">1</td><td class="shape"><svg viewBox="0 0 200 28"><path d="M23 19h150"/><text class="r" x="101" y="16">2647</text></svg></td><td class="m">3900-1233-700+700-20</td><td>层高-本层的露出长度-节点<br>高+节点高-保护层</td><td class="m">(0)</td><td class="m">2647</td><td class="m">1</td></tr>
            </tbody>
          </table>
          <div class="vbar vbar-cut"><i class="a-up"></i><i class="thumb short"></i><i class="spacer"></i><i class="a-dn"></i></div>
        </div>
        <div class="hbar"><i></i></div>
      </div>
    </div>
  </section>
</main>
</body>
</html>
```
FILE: styles.css
```css
* { box-sizing: border-box; }
html, body { height: 100%; }
body {
  margin: 0;
  overflow: hidden;
  background: #f0f0f0;
  color: #000;
  font: 12px/16px "Noto Sans", "Noto Sans CJK SC", sans-serif;
}
ul { list-style: none; margin: 0; padding: 0; }
i { font-style: normal; }
svg { display: block; flex: none; }
button, input, select { font: inherit; color: inherit; margin: 0; padding: 0; border: 0; background: none; }
button { white-space: nowrap; }
.defs { position: absolute; width: 0; height: 0; }
.ic { width: 16px; height: 16px; }
.ic10 { width: 10px; height: 10px; }
.m { font-family: "DejaVu Sans Mono", "Noto Sans CJK SC", monospace; font-size: 10px; }
.rb { display: inline-block; width: 10px; height: 10px; margin: 0 2px; vertical-align: -2px; color: #000; }

.app { display: flex; height: 100vh; }
.nav { flex: 0 0 139px; display: flex; flex-direction: column; margin-bottom: -16px; border-right: 2px solid #fff; overflow: hidden; }
.mid { flex: 0 0 337px; display: flex; flex-direction: column; margin: 0 3px 0 5px; min-height: 0; }
.work { flex: 1; min-width: 0; display: flex; flex-direction: column; }

/* panel captions */
.cap { flex: none; display: flex; justify-content: space-between; align-items: center; border: 1px solid #8c8c8c; background: #f0f0f0; height: 14px; }
.cap-cut { height: 6px; border-top: 0; align-items: flex-end; overflow: hidden; white-space: nowrap; line-height: 14px; }
.cap-shift { margin-left: -14px; }
.cap-btns { display: flex; gap: 9px; padding-right: 3px; }
.cap-prop { margin-top: 5px; font-size: 13px; }

/* left navigation */
.section { flex: none; height: 22px; margin-top: 1px; border: 1px solid #a0a0a0; border-top-color: #fff; background: #f0f0f0; padding-right: 16px; }
.section.first { margin-top: 2px; height: 22px; }
.navbar { flex: none; height: 27px; padding-top: 8px; background: linear-gradient(#fff, #f0f0f0); }
.fold-icons { width: 30px; height: 12px; }
.tree { flex: 1; min-height: 0; overflow: hidden; background: #fff; border: 1px solid #828790; border-left: 0; border-right-width: 2px; }
.node { display: flex; align-items: center; gap: 4px; height: 16px; white-space: nowrap; }
.node::before { content: ""; width: 2px; height: 4px; border: 1px solid #999; border-left: 0; border-radius: 0 3px 3px 0; flex: none; margin-right: 3px; }
.node.open::before { background: #333; border-color: #333; border-radius: 0; }
.new { font: italic bold 9px/9px "Noto Sans", sans-serif; background: #ffe600; align-self: flex-start; margin-left: -4px; }
.kids > li { display: flex; height: 16px; align-items: center; padding-left: 17px; white-space: nowrap; }
.kids > li::before {
  content: "";
  flex: 0 0 11px;
  align-self: flex-start;
  height: 16px;
  border-left: 1px dotted #777;
  background: repeating-linear-gradient(90deg, #888 0 1px, transparent 1px 2px) 0 8px / 100% 1px no-repeat;
}
.kids > li:last-child::before { height: 9px; }
.lbl { padding-left: 4px; }
.kids > .current { position: relative; }
.current::after { content: ""; position: absolute; left: 26px; top: 0; width: 69px; height: 16px; border: 1px solid #d0d0d0; border-radius: 3px; background: rgba(0, 0, 0, .05); }

/* component list */
.minibar { flex: none; height: 28px; display: flex; align-items: center; gap: 8px; padding-left: 4px; background: linear-gradient(#fff, #ececec); }
.minibar button, .bar button { display: flex; align-items: center; }
.minibar button { gap: 3px; }
.search { flex: none; height: 24px; display: flex; margin-top: 1px; }
.search input { flex: 1; min-width: 0; height: 23px; border: 1px solid #abadb3; background: #fff; padding: 0 2px 2px; }
.search input::placeholder { color: #777; opacity: 1; }
.search button { flex: 0 0 25px; display: flex; align-items: center; justify-content: center; }
.comps { flex: none; height: 105px; margin-top: 1px; background: #fff; border: 1px solid #828790; padding-top: 2px; }
.comp-root { display: flex; align-items: center; height: 16px; padding-left: 10px; gap: 4px; }
.comp-root .ic { margin-left: 4px; }
.tri { width: 6px; height: 6px; background: #333; clip-path: polygon(100% 0, 100% 100%, 0 100%); }
.comps .kids > li { padding-left: 31px; }
.comps .kids > li::before { flex-basis: 9px; }
.comp { display: flex; align-items: center; height: 16px; gap: 4px; padding: 0 5px 0 1px; }
.sel .comp { background: #316ac5; }

/* property editor */
.props { flex: none; height: 210px; margin-top: 2px; display: flex; border: 1px solid #a0a0a0; background: #f4f4f4; overflow: hidden; }
.ptable { flex: 1; min-width: 0; height: 0; }
table { border-collapse: separate; border-spacing: 0; table-layout: fixed; width: 100%; }
th { font-weight: normal; padding: 0; border-right: 1px solid #c0c0c0; border-bottom: 1px solid #c0c0c0; background: linear-gradient(90deg, #fff, #f0f0f0); }
thead th { background: linear-gradient(#fff, #eee); white-space: nowrap; overflow: hidden; }
th.hot { background: linear-gradient(#f8d898, #f2c060); color: #600060; }
td { border-right: 1px solid #c0c0c0; border-bottom: 1px solid #c0c0c0; overflow: hidden; white-space: nowrap; }
.ptable thead th { height: 24px; }
.ptable tbody tr { height: 19px; }
.ptable td, .ptable tbody th { height: 19px; padding: 0; line-height: 16px; }
.ptable td { background: #fff; color: #808080; padding-left: 2px; }
.ptable td:nth-child(2) { color: #00f; padding-left: 19px; }
.ptable .blk td:nth-child(2) { color: #000; }
.ptable .dim td:nth-child(2) { color: #808080; }
.ptable .on td { background: #e0f0ff; }
.ptable .on td:nth-child(2) { background: #39f; color: #fff; }
.on th { background: #ffd48c; color: #600060; }
.p-n { width: 22px; }
.p-k { width: 121px; }
.vbar { flex: 0 0 19px; display: flex; flex-direction: column; align-items: center; background: #f0f0f0; padding: 7px 1px; }
.a-up, .a-dn { width: 6px; height: 4px; background: #444; clip-path: polygon(50% 0, 100% 100%, 0 100%); flex: none; }
.a-dn { clip-path: polygon(0 0, 100% 0, 50% 100%); }
.thumb { width: 15px; height: 100px; margin-top: 7px; border: 1px solid #979797; border-radius: 2px; background: repeating-linear-gradient(#777 0 1px, #eee 1px 3px) center / 7px 8px no-repeat, linear-gradient(90deg, #f4f4f4, #cfcfcf); }
.spacer { flex: 1; }

/* section sketch */
.sketch { flex: 1; min-height: 0; margin: 4px 0 0 1px; background: #000; overflow: hidden; }
.sketch svg { width: 100%; }
.dimtext { font: 24px "Liberation Serif", serif; fill: #fff; text-anchor: middle; }

/* toolbars */
.bars { flex: none; height: 73px; overflow: hidden; display: flex; flex-direction: column; gap: 3px; }
.bar { flex: none; display: flex; align-items: center; height: 25px; background: linear-gradient(#fbfbfb, #efefef); padding-left: 4px; white-space: nowrap; }
.bar-top { margin-top: -9px; }
.bar button { height: 25px; padding: 0 4px; gap: 3px; }
.bar button:disabled { color: #868686; }
.bar .tog { border: 1px solid #3399ff; background: #e4eefa; padding: 0 3px; height: 23px; }
.grip { flex: none; width: 2px; height: 16px; margin-right: 1px; background: repeating-linear-gradient(#b8b8b8 0 2px, transparent 2px 4px); }
.grip-combo { margin-right: 4px; }
.grip-in { margin: 0 2px 0 6px; }
.grip-far { margin: 0 1px 0 18px; }
.sep { flex: none; width: 1px; height: 16px; margin: 0 2px 0 3px; background: #b4b4b4; }
.sep-tog { margin-right: 1px; }
.dd { flex: none; width: 5px; height: 3px; background: #000; clip-path: polygon(0 0, 100% 0, 50% 100%); margin-left: 1px; }
.dd.wide { margin-left: 4px; }
:disabled .dd { background: #999; }
.combo { display: grid; align-items: center; height: 21px; background: #fff; margin-right: 3px; flex: none; }
.combo select { grid-area: 1 / 1; width: 100%; height: 21px; padding-left: 1px; appearance: none; background: linear-gradient(90deg, #fff calc(100% - 12px), #f0f0f0 0); }
.combo .dd { grid-area: 1 / 1; justify-self: end; margin-right: 4px; pointer-events: none; }
.c1 { width: 56px; }
.c2 { width: 69px; }
.c3 { width: 58px; }
.bar-snap { height: 27px; margin-top: 2px; }
.num { display: flex; align-items: center; gap: 3px; color: #808080; }
.num + .num { margin-left: 4px; }
.spin { display: flex; align-items: center; width: 58px; height: 23px; border: 1px solid #808080; }
.spin.wide { width: 68px; }
.spin input { flex: 1; min-width: 0; width: 20px; text-align: right; }
.spins { flex: none; width: 7px; height: 15px; margin: 0 3px 0 8px; background: #777; clip-path: polygon(50% 0, 100% 25%, 0 25%, 0 75%, 100% 75%, 50% 100%, 0 75%, 0 25%); }
.rot { display: flex; align-items: center; gap: 8px; margin-right: 5px; }
input[type="checkbox"] { appearance: none; flex: none; width: 11px; height: 11px; border: 1px solid #8e8f8f; background: linear-gradient(135deg, #dcdcdc, #fff); }
input[type="checkbox"]:checked::before { content: ""; display: block; width: 9px; height: 9px; background: #3c5aa8; clip-path: polygon(10% 50%, 30% 45%, 45% 65%, 75% 5%, 95% 5%, 50% 95%, 40% 95%); }

/* 3D view */
.view { position: relative; flex: 1; min-height: 0; background: #000; overflow: hidden; }
.scene { width: 100%; height: 100%; }
.axis-no { font: 17px "DejaVu Sans Mono", monospace; fill: #e0e0e0; text-anchor: middle; }
.axis-l { font: 13px "Noto Sans", sans-serif; text-anchor: middle; }
.axis-l .small { font-size: 9px; }
.panel { position: absolute; left: 3px; top: 3px; width: 180px; padding: 8px 7px 7px 6px; background: linear-gradient(#98b0cc, #b9d0ea 36px); border: 1px solid #fff; border-right-color: #38c8e8; border-bottom-color: #38c8e8; outline: 1px solid #333; }
.panel h2 { margin: 0 0 2px; font: inherit; line-height: 16px; }
.panel-list { height: 146px; background: #fff; border: 2px solid #828790; border-right-color: #a8b4c0; border-bottom-color: #a8b4c0; padding: 2px 1px; }
.panel-list label { display: flex; align-items: center; height: 12px; line-height: 12px; gap: 3px; padding-left: 2px; }
.panel-list label > span { flex: 1; height: 12px; white-space: nowrap; }
.panel-list .hl > span { background: #39f; color: #fff; outline: 1px dotted #c06010; outline-offset: -1px; }

/* rebar dock */
.dock { flex: none; height: 184px; display: flex; margin-top: 3px; }
.gutter { flex: 0 0 12px; background: radial-gradient(circle at 2px 2px, #c0c0c0 1px, transparent 1px) 2px 2px / 5px 5px; }
.gutter button { display: block; width: 12px; height: 12px; border: 1px solid #444; background: #f0f0f0; }
.dock-main { flex: 1; min-width: 0; display: flex; flex-direction: column; }
.bar-dock { height: 28px; padding-left: 0; }
.bar-dock .nv { padding: 0 4px; }
.bar-dock .sep { margin: 0 1px 0 2px; }
.total { padding-left: 6px; }
.grid-wrap { flex: 1; min-height: 0; display: flex; overflow: hidden; border-top: 1px solid #a0a0a0; border-left: 1px solid #a0a0a0; padding-left: 2px; }
.rtable { flex: 1; min-width: 0; height: 0; }
.rtable thead th { height: 20px; }
.rtable .edge { text-align: left; padding-left: 3px; }
.rtable td { height: 29px; background: #ccffdb; padding: 0 0 0 1px; line-height: 12px; }
.rtable .tall td { height: 41px; }
.rtable td.c { padding: 0; text-align: center; }
.rtable td:nth-child(2) { border-right-color: #000; }
.rtable .on td:nth-child(2) { background: #b4f0e0; }
.rtable td.shape { padding: 0; }
.shape svg { width: 200px; height: 28px; }
.tall .shape svg { height: 40px; }
.shape path { fill: none; stroke: #000; stroke-width: 2; }
.shape text { font: 10px "DejaVu Sans Mono", monospace; }
.shape .r { fill: #f00; text-anchor: middle; }
.w32 { width: 32px; } .w73 { width: 73px; } .w56 { width: 56px; } .w36 { width: 36px; } .w33 { width: 33px; }
.w166 { width: 166px; } .w156 { width: 156px; } .w81 { width: 81px; } .w61 { width: 61px; } .w10 { width: 10px; }
.vbar-cut { flex-basis: 7px; align-items: flex-start; overflow: hidden; padding-left: 0; }
.thumb.short { height: 15px; flex: none; margin-top: 6px; background: linear-gradient(90deg, #f4f4f4, #d8d8d8); }
.hbar { flex: none; height: 2px; background: #e8e8e8; }
.hbar i { display: block; width: 330px; height: 2px; margin-left: 20px; background: #979797; }
```
